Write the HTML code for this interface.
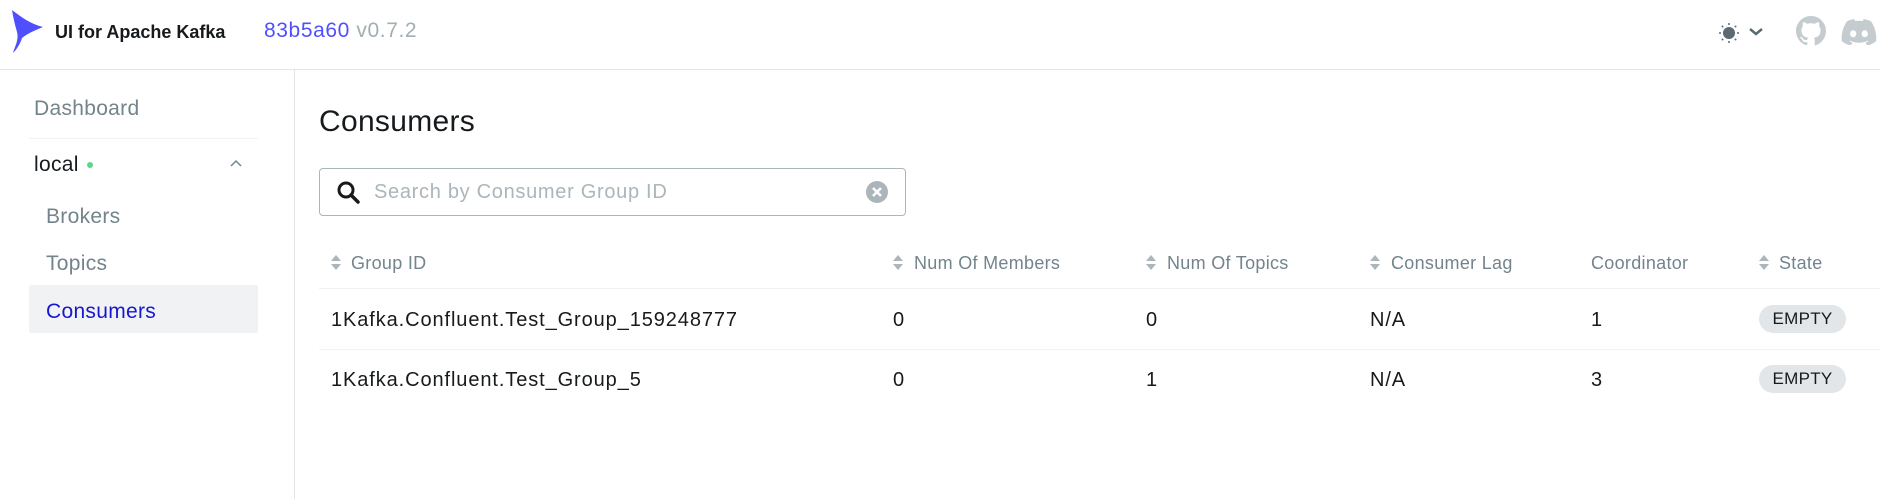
<!DOCTYPE html>
<html><head><meta charset="utf-8"><style>
*{box-sizing:border-box;margin:0;padding:0}
body{width:1880px;height:499px;overflow:hidden;background:#fff;font-family:"Liberation Sans",sans-serif;color:#171a1c;position:relative}
.a{position:absolute;white-space:nowrap}
.hd{font-size:18px;color:#73848c;letter-spacing:0.3px}
.rw{font-size:20px;color:#171a1c;letter-spacing:0.9px}
.arr{position:absolute;width:12px;height:17px}
.sb{font-size:21px;color:#73848c;letter-spacing:0.3px}
.badge{position:absolute;left:1759px;width:87px;height:28px;border-radius:14px;background:#e3e6e8;font-size:17px;text-align:center;line-height:28px;color:#171a1c;letter-spacing:0.3px}
</style></head><body>
<svg class="a" style="left:0;top:0" width="50" height="60" viewBox="0 0 50 60"><path d="M12 10 C20 16 30 24 43 27 C36 30 28 33 22 38 C20 44 17 49 13 53 C15 46 19 40 17 32 C15 25 13 17 12 10 Z" fill="#4f4ffe"/></svg>
<div class="a" style="left:55px;top:22px;font-size:18px;font-weight:bold">UI for Apache Kafka</div>
<div class="a" style="left:264px;top:19px;font-size:21px;letter-spacing:0.6px;color:#4f4ffe">83b5a60 <span style="color:#a3aeb3">v0.7.2</span></div>
<svg class="a" style="left:1718px;top:22px" width="22" height="22" viewBox="0 0 22 22" fill="#5c6b73"><circle cx="11" cy="11" r="6"/><circle cx="11" cy="2" r="1"/><circle cx="11" cy="20" r="1"/><circle cx="2" cy="11" r="1"/><circle cx="20" cy="11" r="1"/><circle cx="4.5" cy="4.5" r="1"/><circle cx="17.5" cy="4.5" r="1"/><circle cx="4.5" cy="17.5" r="1"/><circle cx="17.5" cy="17.5" r="1"/></svg>
<svg class="a" style="left:1748px;top:27px" width="16" height="10" viewBox="0 0 16 10"><path d="M2 2 L8 7 L14 2" stroke="#5c6b73" stroke-width="2.5" fill="none"/></svg>
<svg class="a" style="left:1796px;top:16px" width="30" height="30" viewBox="0 0 16 16"><path fill="#c5ccd0" d="M8 0C3.58 0 0 3.580 0 8c0 3.54 2.29 6.53 5.47 7.59.4.07.55-.17.55-.38v-1.33c-2.23.48-2.700-1.070-2.7-1.07-.36-.93-.89-1.17-.89-1.17-.73-.5.05-.49.05-.49.8.06 1.23.83 1.23.83.72 1.22 1.87.87 2.33.66.07-.52.28-.87.5-1.07-1.780-.2-3.640-.89-3.64-3.95 0-.87.31-1.59.82-2.15-.08-.2-.36-1.02.08-2.12 0 0 .67-.21 2.2.82a7.6 7.6 0 0 1 4 0c1.53-1.04 2.2-.82 2.2-.82.44 1.1.16 1.92.08 2.12.51.56.82 1.27.82 2.15 0 3.07-1.87 3.75-3.65 3.95.29.25.54.73.54 1.48v2.2c0 .21.15.46.55.38A8.01 8.01 0 0 0 16 8c0-4.42-3.58-8-8-8z"/></svg>
<svg class="a" style="left:1841px;top:19px" width="36" height="26" viewBox="0 0 36 26"><path fill="#c5ccd0" d="M30 2.2A29 29 0 0 0 22.8 0l-1 2a27 27 0 0 0-7.600 0l-1-2A29 29 0 0 0 6 2.2C1.4 9 .2 15.7.8 22.3A29 29 0 0 0 9.6 26.7l1.9-3a19 19 0 0 1-3-1.4l.7-.6a21 21 0 0 0 17.6 0l.7.6a19 19 0 0 1-3 1.4l1.9 3a29 29 0 0 0 8.8-4.4C35.8 14.6 33.9 8 30 2.2zM12.2 18.2c-1.7 0-3.1-1.6-3.1-3.5s1.4-3.5 3.1-3.5 3.1 1.6 3.1 3.5-1.4 3.5-3.1 3.5zm11.6 0c-1.7 0-3.1-1.6-3.1-3.5s1.4-3.5 3.1-3.5 3.1 1.6 3.1 3.5-1.4 3.5-3.1 3.5z"/></svg>
<div class="a" style="left:0;top:69px;width:1880px;height:1px;background:#e3e6e8"></div>
<div class="a" style="left:294px;top:70px;width:1px;height:429px;background:#e3e6e8"></div>
<div class="a sb" style="left:34px;top:97px">Dashboard</div>
<div class="a" style="left:29px;top:138px;width:229px;height:1px;background:#f1f2f3"></div>
<div class="a sb" style="left:34px;top:153px;color:#171a1c">local <span style="display:inline-block;width:6px;height:6px;border-radius:3px;background:#5cd685;vertical-align:middle;margin-left:2px"></span></div>
<svg class="a" style="left:229px;top:159px" width="14" height="9" viewBox="0 0 14 9"><path d="M2 7 L7 2 L12 7" stroke="#73848c" stroke-width="1.5" fill="none"/></svg>
<div class="a sb" style="left:46px;top:205px">Brokers</div>
<div class="a sb" style="left:46px;top:252px">Topics</div>
<div class="a" style="left:29px;top:285px;width:229px;height:48px;background:#f1f2f3;border-radius:2px"></div>
<div class="a sb" style="left:46px;top:300px;color:#1717cf">Consumers</div>
<div class="a" style="left:319px;top:105px;font-size:30px;letter-spacing:0.3px">Consumers</div>
<div class="a" style="left:319px;top:168px;width:587px;height:48px;border:1px solid #abb5ba;border-radius:4px"></div>
<svg class="a" style="left:336px;top:180px" width="24" height="24" viewBox="0 0 24 24"><circle cx="10" cy="10" r="7" stroke="#171a1c" stroke-width="3" fill="none"/><path d="M15 15 L22 22" stroke="#171a1c" stroke-width="3.5" stroke-linecap="round"/></svg>
<div class="a" style="left:374px;top:181px;font-size:20px;letter-spacing:0.7px;color:#abb5ba">Search by Consumer Group ID</div>
<svg class="a" style="left:865px;top:180px" width="24" height="24" viewBox="0 0 24 24"><circle cx="12" cy="12" r="11" fill="#abb5ba"/><path d="M8 8 L16 16 M16 8 L8 16" stroke="#fff" stroke-width="2.5"/></svg>
<svg width="0" height="0" style="position:absolute"><defs><g id="ar"><path d="M1 7 L6 1 L11 7Z M1 10 L6 16 L11 10Z" fill="#abb5ba"/></g></defs></svg>
<svg class="arr" style="left:330px;top:254px"><use href="#ar"/></svg>
<div class="a hd" style="left:351px;top:253px">Group ID</div>
<svg class="arr" style="left:892px;top:254px"><use href="#ar"/></svg>
<div class="a hd" style="left:914px;top:253px">Num Of Members</div>
<svg class="arr" style="left:1145px;top:254px"><use href="#ar"/></svg>
<div class="a hd" style="left:1167px;top:253px">Num Of Topics</div>
<svg class="arr" style="left:1369px;top:254px"><use href="#ar"/></svg>
<div class="a hd" style="left:1391px;top:253px">Consumer Lag</div>
<div class="a hd" style="left:1591px;top:253px">Coordinator</div>
<svg class="arr" style="left:1758px;top:254px"><use href="#ar"/></svg>
<div class="a hd" style="left:1779px;top:253px">State</div>
<div class="a" style="left:319px;top:288px;width:1561px;height:1px;background:#f1f2f3"></div>
<div class="a rw" style="left:331px;top:309px">1Kafka.Confluent.Test_Group_159248777</div>
<div class="a rw" style="left:893px;top:309px">0</div>
<div class="a rw" style="left:1146px;top:309px">0</div>
<div class="a rw" style="left:1370px;top:309px">N/A</div>
<div class="a rw" style="left:1591px;top:309px">1</div>
<div class="badge" style="top:305px">EMPTY</div>
<div class="a" style="left:319px;top:349px;width:1561px;height:1px;background:#f1f2f3"></div>
<div class="a rw" style="left:331px;top:369px">1Kafka.Confluent.Test_Group_5</div>
<div class="a rw" style="left:893px;top:369px">0</div>
<div class="a rw" style="left:1146px;top:369px">1</div>
<div class="a rw" style="left:1370px;top:369px">N/A</div>
<div class="a rw" style="left:1591px;top:369px">3</div>
<div class="badge" style="top:365px">EMPTY</div>
</body></html>
